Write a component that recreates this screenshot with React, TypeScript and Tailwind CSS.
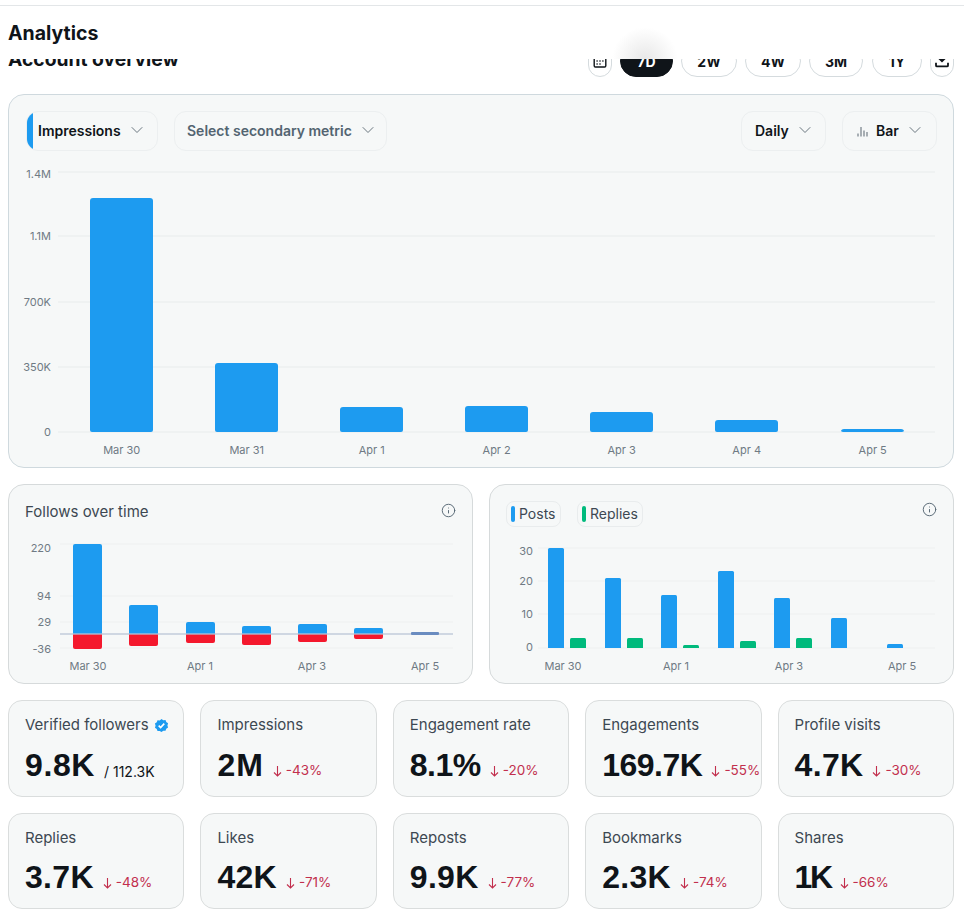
import { ChevronDown, Info } from "lucide-react";

const sans = "font-['Inter','Liberation_Sans',sans-serif]";

function Select({ label, bar, muted, icon, className }: { label: string; bar?: boolean; muted?: boolean; icon?: boolean; className: string }) {
  return (
    <div className={`relative flex h-10 items-center gap-[6px] overflow-hidden rounded-xl border border-[#eceff0] pb-[2px] text-[14px] font-semibold ${muted ? "text-[#536471]" : "text-[#0f1419]"} ${className}`}>
      {bar && <span className="absolute bottom-0 left-0 top-0 w-[6px] bg-[#1d9bf0]" />}
      {icon && (
        <svg width="11" height="11" viewBox="0 0 11 11" className="mr-[2px] mt-[3px]" stroke="#66717b" strokeWidth="1.1" fill="none">
          <path d="M1 10.5V7.5M4 10.5V1M7 10.5V4.5M10 10.5V6" />
        </svg>
      )}
      <span>{label}</span>
      <ChevronDown size={20} strokeWidth={1.2} className="text-[#6b7780]" />
    </div>
  );
}

function Range({ label, active, className }: { label: string; active?: boolean; className: string }) {
  return (
    <div className={`flex h-8 items-center justify-center rounded-full border text-[14px] font-bold ${active ? "border-[#0f1419] bg-[#0f1419] text-white" : "border-[#d5dbde] bg-white text-[#0f1419]"} ${className}`}>
      {label}
    </div>
  );
}

function IconButton({ children }: { children: React.ReactNode }) {
  return <div className="flex h-8 w-6 items-center justify-center rounded-full border border-[#d5dbde] bg-white">{children}</div>;
}

function Stat({ label, value, delta, verified, sub, track = "tracking-[0.3px]", lift = "mt-[10px]" }: { label: string; value: string; delta?: string; verified?: boolean; sub?: string; track?: string; lift?: string }) {
  return (
    <div className="h-full rounded-[14px] border border-[#dadddd] bg-[#f6f8f8] pl-4 pt-[14px]">
      <div className="flex h-5 items-center gap-[5px] whitespace-nowrap text-[15px] text-[#3d4852]">
        {label}
        {verified && (
          <svg width="15" height="15" viewBox="0 0 24 24" className="mt-[1px]">
            <path fill="#1d9bf0" d="M12 1.5l2.9 1.9 3.5-.2 1.2 3.2 2.9 2-1 3.4 1 3.3-2.9 2-1.2 3.3-3.5-.2L12 22.5l-2.9-1.9-3.5.2-1.2-3.3-2.9-2 1-3.3-1-3.4 2.9-2 1.2-3.2 3.5.2z" />
            <path fill="none" stroke="#fff" strokeWidth="2.6" d="M7.5 12.3l3.1 3.1 5.8-6.4" />
          </svg>
        )}
      </div>
      <div className={`flex items-baseline whitespace-nowrap ${lift}`}>
        <span className={`font-['Liberation_Sans',sans-serif] text-[32px] font-bold leading-[40px] text-[#0f1419] ${track}`}>{value}</span>
        {delta && (
          <span className={`ml-[9px] flex translate-y-[1px] items-center text-[13.5px] text-[#c22f4d]`}>
            <svg width="9" height="12" viewBox="0 0 9 12" fill="none" stroke="currentColor" strokeWidth="1.1" className="mr-[4px] mt-[1px]">
              <path d="M4.5 1v10M1 7.5L4.5 11 8 7.5" />
            </svg>
            {delta}
          </span>
        )}
        {sub && <span className="ml-[9px] translate-y-[1px] text-[14px] text-[#0f1419]">{sub}</span>}
      </div>
    </div>
  );
}

const mainBars = [
  { x: 90, y: 198, label: "Mar 30" },
  { x: 215, y: 363, label: "Mar 31" },
  { x: 340, y: 407, label: "Apr 1" },
  { x: 465, y: 406, label: "Apr 2" },
  { x: 590, y: 412, label: "Apr 3" },
  { x: 715, y: 420, label: "Apr 4" },
  { x: 841, y: 429, label: "Apr 5" },
];
const mainTicks: [number, string, number][] = [[172, "1.4M", 178], [236, "1.1M", 240], [302, "700K", 306], [367, "350K", 371], [432, "0", 436]];

function MainChart() {
  return (
    <svg viewBox="26 160 911 300" width="911" height="300" className="mt-[9px] block overflow-visible">
      {mainTicks.map(([y, t, ty]) => (
        <g key={t}>
          <line x1="58" x2="935" y1={y} y2={y} stroke="#edf0f0" strokeWidth="1.5" />
          <text x="51" y={ty} textAnchor="end" fontSize="11" fill="#6f7a84">{t}</text>
        </g>
      ))}
      {mainBars.map((b) => (
        <g key={b.label}>
          <path fill="#1d9bf0" d={`M${b.x} 430V${b.y + 3}q0-3 3-3h57q3 0 3 3V430q0 2-2 2H${b.x + 2}q-2 0-2-2z`} />
          <text x={b.x + 31.7} y="454" textAnchor="middle" fontSize="11" fill="#6f7a84">{b.label}</text>
        </g>
      ))}
    </svg>
  );
}

const follows = [
  { x: 73, top: 544, bottom: 649 },
  { x: 129, top: 605, bottom: 646 },
  { x: 186, top: 622, bottom: 643 },
  { x: 242, top: 626, bottom: 645 },
  { x: 298, top: 624, bottom: 642 },
  { x: 354, top: 628, bottom: 639 },
];

function FollowsChart() {
  const ticks: [number, string, number][] = [[544, "220", 552], [596, "94", 600], [622, "29", 626], [648, "-36", 653]];
  const labels: [number, string][] = [[88, "Mar 30"], [200, "Apr 1"], [312, "Apr 3"], [425, "Apr 5"]];
  return (
    <svg viewBox="25 535 431 140" width="431" height="140" className="block">
      {ticks.map(([y, t, ty]) => (
        <g key={t}>
          <line x1="60" x2="453" y1={y} y2={y} stroke="#edf0f0" strokeWidth="1.2" />
          <text x="51" y={ty} textAnchor="end" fontSize="11" fill="#6f7a84">{t}</text>
        </g>
      ))}
      {follows.map((b) => (
        <g key={b.x}>
          <path fill="#1d9bf0" d={`M${b.x} 634V${b.top + 2}q0-2 2-2h25q2 0 2 2V634z`} />
          <path fill="#f4182d" d={`M${b.x} 634V${b.bottom - 2}q0 2 2 2h25q2 0 2-2V634z`} />
        </g>
      ))}
      <line x1="60" x2="453" y1="634" y2="634" stroke="#b9c3d4" strokeWidth="1.5" strokeOpacity="0.85" />
      <rect x="411" y="632" width="28" height="3" rx="1" fill="#6a8cc0" />
      {labels.map(([x, t]) => (
        <text key={t} x={x} y="670" textAnchor="middle" fontSize="11" fill="#6f7a84">{t}</text>
      ))}
    </svg>
  );
}

const posts = [
  { x: 548, top: 548, reply: 638 },
  { x: 605, top: 578, reply: 638 },
  { x: 661, top: 595, reply: 645 },
  { x: 718, top: 571, reply: 641 },
  { x: 774, top: 598, reply: 638 },
  { x: 831, top: 618 },
  { x: 887, top: 644 },
];

function PostsChart() {
  const ticks: [number, string, number][] = [[548, "30", 555], [581, "20", 585], [614, "10", 618], [648, "0", 651]];
  const labels: [number, string][] = [[563, "Mar 30"], [676, "Apr 1"], [789, "Apr 3"], [902, "Apr 5"]];
  return (
    <svg viewBox="506 535 431 140" width="431" height="140" className="block">
      {ticks.map(([y, t, ty]) => (
        <g key={t}>
          <line x1="538" x2="935" y1={y} y2={y} stroke="#edf0f0" strokeWidth="1.2" />
          <text x="533" y={ty} textAnchor="end" fontSize="11" fill="#6f7a84">{t}</text>
        </g>
      ))}
      {posts.map((b) => (
        <g key={b.x}>
          <path fill="#1d9bf0" d={`M${b.x} 648V${b.top + 1.5}q0-1.5 1.5-1.5h13q1.5 0 1.5 1.5V648z`} />
          {b.reply && <path fill="#00ba7c" d={`M${b.x + 22} 648V${b.reply + 1.5}q0-1.5 1.5-1.5h13q1.5 0 1.5 1.5V648z`} />}
        </g>
      ))}
      {labels.map(([x, t]) => (
        <text key={t} x={x} y="670" textAnchor="middle" fontSize="11" fill="#6f7a84">{t}</text>
      ))}
    </svg>
  );
}

function Legend({ label, color, className }: { label: string; color: string; className: string }) {
  return (
    <div className={`flex h-[26px] items-center gap-[4px] rounded-lg border border-[#e9eced] pb-[1px] pl-[4px] text-[14px] text-[#3d4852] ${className}`}>
      <span className={`h-4 w-[4px] rounded-full ${color}`} />
      {label}
    </div>
  );
}

export default function App() {
  return (
    <div className={`${sans} min-h-[918px] bg-white`}>
      <div className="h-[6px] border-b border-[#e3e6e8]" />
      <div className="relative flex h-[53px] items-start bg-white pl-2 pt-[13px]">
        <h1 className="text-[19.5px] font-bold leading-7 text-[#0f1419]">Analytics</h1>
        <div className="absolute bottom-0 left-[612px] h-[32px] w-[66px] bg-[radial-gradient(ellipse_at_bottom,#e8e8e8,transparent_70%)]" />
      </div>
      <main className="pl-2 pr-[10px]">
        <div className="flex h-[19px] items-end justify-between overflow-hidden">
          <h2 className="mb-[5px] text-[19.3px] font-bold leading-7 text-[#0f1419]">Account overview</h2>
          <div className="mb-px flex items-center gap-2">
            <IconButton>
              <svg width="16" height="16" viewBox="0 0 16 16" fill="none" stroke="#0f1419" strokeWidth="1.4">
                <rect x="2.2" y="2" width="11.6" height="12" rx="1.2" />
                <path d="M2.2 5h11.6" />
                <path strokeWidth="1.5" d="M4.5 8h1.2M7.4 8h1.2M10.3 8h1.2M4.5 11h1.2M7.4 11h1.2" />
              </svg>
            </IconButton>
            <Range label="7D" active className="w-[53px]" />
            <Range label="2W" className="w-14" />
            <Range label="4W" className="w-14" />
            <Range label="3M" className="w-[54px]" />
            <Range label="1Y" className="ml-px w-[50px]" />
            <IconButton>
              <svg width="16" height="16" viewBox="0 0 16 16" fill="none" stroke="#0f1419" strokeWidth="1.8">
                <path d="M8 1.5v6.5M4.9 5.2L8 8.3l3.1-3.1" />
                <path d="M2 9.8v2.6q0 1 1 1h10q1 0 1-1V9.8" />
              </svg>
            </IconButton>
          </div>
        </div>

        <section className="mt-4 h-[374px] rounded-2xl border border-[#cfd9de] bg-[#f6f8f8] pl-[17px] pr-4 pt-4">
          <div className="flex items-center">
            <Select label="Impressions" bar className="w-[132px] pl-[11px]" />
            <Select label="Select secondary metric" muted className="ml-4 w-[213px] pl-3" />
            <Select label="Daily" className="ml-auto w-[85px] pl-[13px]" />
            <Select label="Bar" icon className="ml-4 w-[95px] pl-[14px]" />
          </div>
          <MainChart />
        </section>

        <div className="mt-4 grid h-[200px] grid-cols-2 gap-4">
          <section className="relative rounded-2xl border border-[#d6dadb] bg-[#f6f8f8] px-4 pt-4">
            <div className="flex h-[21px] items-center justify-between">
              <span className="mt-[2px] text-[15px] text-[#3d4852]">Follows over time</span>
              <Info size={15} strokeWidth={1.5} className="mb-[3px] text-[#536471]" />
            </div>
            <div className="mt-[13px]"><FollowsChart /></div>
          </section>
          <section className="relative rounded-2xl border border-[#d6dadb] bg-[#f6f8f8] px-4 pt-4">
            <div className="flex h-[26px] items-start">
              <Legend label="Posts" color="bg-[#1d9bf0]" className="w-[55px]" />
              <Legend label="Replies" color="bg-[#00ba7c]" className="ml-4 w-[66px]" />
              <Info size={15} strokeWidth={1.5} className="ml-auto mt-[1px] text-[#536471]" />
            </div>
            <div className="mt-2"><PostsChart /></div>
          </section>
        </div>

        <div className="mt-4 grid grid-cols-5 grid-rows-[97px_96px] gap-4">
          <Stat label="Verified followers" value="9.8K" sub="/ 112.3K" verified track="tracking-[0.6px]" />
          <Stat label="Impressions" value="2M" delta="-43%" track="tracking-[1px]" />
          <Stat label="Engagement rate" value="8.1%" delta="-20%" track="tracking-[-0.5px]" />
          <Stat label="Engagements" value="169.7K" delta="-55%" track="tracking-[-0.5px]" />
          <Stat label="Profile visits" value="4.7K" delta="-30%" />
          <Stat label="Replies" value="3.7K" delta="-48%" lift="mt-[9px]" />
          <Stat label="Likes" value="42K" delta="-71%" lift="mt-[9px]" />
          <Stat label="Reposts" value="9.9K" delta="-77%" lift="mt-[9px]" />
          <Stat label="Bookmarks" value="2.3K" delta="-74%" lift="mt-[9px]" />
          <Stat label="Shares" value="1K" delta="-66%" track="tracking-[-2.5px]" lift="mt-[9px]" />
        </div>
      </main>
    </div>
  );
}
